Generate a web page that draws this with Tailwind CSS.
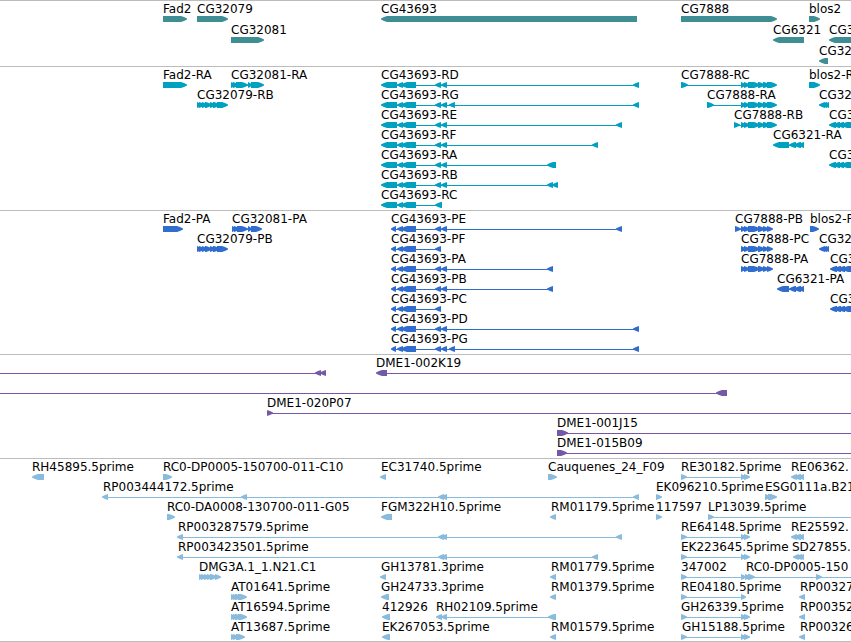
<!DOCTYPE html>
<html lang="en">
<head>
    <meta charset="UTF-8">
    <meta name="viewport" content="width=device-width, initial-scale=1.0">
    <title>Genome Tracks</title>
    <script src="https://cdn.jsdelivr.net/npm/@tailwindcss/browser@4"></script>
</head>
<body class="bg-white text-black font-['DejaVu_Sans',sans-serif] text-[12px] leading-3">

    <main id="tracks" class="w-full overflow-hidden border-b border-[#bcbcbc]"></main>

    <script>
        // Anything past this point runs off the right side of the view
        const END = 4000;

        // Shared exon groups
        const rTail = [[381, 397], [397, 403], [401, 416]];
        const pTail = [[391, 396], [397, 403], [401, 416]];
        const mid = [[435, 441], [441, 447]];
        const cg7888 = [[741, 746], [744, 750], [748, 760], [758, 765], [763, 770], [767, 777]];
        const cg7888p = [[741, 746], [744, 750], [748, 760], [758, 765], [763, 769], [767, 773]];
        const cg32079 = [[197, 202], [199, 205], [202, 208], [205, 212], [210, 216], [213, 220], [217, 228]];
        const cg32081 = [[231, 236], [233, 239], [236, 248], [248, 252], [251, 264]];
        const cg32081p = [[232, 237], [234, 240], [237, 248], [248, 252], [251, 262]];
        const cg6321 = [[789, 796], [794, 801], [798, 804]];
        const cg32 = [[819, 825], [821, 827], [824, 829]];
        const cg3 = [[829, 836], [833, 840], [837, 844], [841, 860]];
        const cg3p = [[830, 837], [834, 841], [838, 845], [842, 860]];
        const re = [[681, 687], [741, 746], [744, 750]];
        const re3 = [[791, 797], [794, 801], [798, 804]];
        const estMid = [[438, 444], [441, 447]];
        const at = [[231, 236], [233, 239], [235, 242], [238, 247]];

        // Feature: [label, label x, strand, exons, line start, line end]
        const tracks = [
            { fill: 'fill-[#3e8e93]', track: 'pt-0.5', row: 'h-[21px]', rows: [
                [
                    ['Fad2', 163, '>', [[163, 187]]],
                    ['CG32079', 197, '>', [[197, 228]]],
                    ['CG43693', 381, '<', [[381, 637]]],
                    ['CG7888', 681, '>', [[681, 777]]],
                    ['blos2', 809, '>', [[809, 820]]],
                ],
                [
                    ['CG32081', 231, '>', [[231, 264]]],
                    ['CG6321', 773, '<', [[773, 804]]],
                    ['CG3', 829, '<', [[829, END]]],
                ],
                [
                    ['CG32', 819, '<', [[819, 828]]],
                ],
            ] },
            { fill: 'fill-[#00a0c0]', track: 'pt-0.5 pb-px', row: 'h-5', rows: [
                [
                    ['Fad2-RA', 163, '>', [[163, 187]]],
                    ['CG32081-RA', 231, '>', cg32081],
                    ['CG43693-RD', 381, '<', [...rTail, ...mid, [633, 639]]],
                    ['CG7888-RC', 681, '>', [[681, 688], ...cg7888]],
                    ['blos2-R', 809, '>', [[809, 820]]],
                ],
                [
                    ['CG32079-RB', 197, '>', cg32079],
                    ['CG43693-RG', 381, '<', [...rTail, ...mid, [449, 455], [633, 639]]],
                    ['CG7888-RA', 707, '>', [[707, 714], ...cg7888]],
                    ['CG32', 819, '<', cg32],
                ],
                [
                    ['CG43693-RE', 381, '<', [...rTail, ...mid, [616, 622]]],
                    ['CG7888-RB', 734, '>', [[734, 740], ...cg7888]],
                    ['CG3', 829, '<', cg3],
                ],
                [
                    ['CG43693-RF', 381, '<', [...rTail, ...mid, [592, 598]]],
                    ['CG6321-RA', 773, '<', [[773, 789], ...cg6321]],
                ],
                [
                    ['CG43693-RA', 381, '<', [...rTail, ...mid, [547, 556]]],
                    ['CG3', 829, '<', cg3],
                ],
                [
                    ['CG43693-RB', 381, '<', [...rTail, ...mid, [547, 553], [552, 558]]],
                ],
                [
                    ['CG43693-RC', 381, '<', [...rTail, [435, 442]]],
                ],
            ] },
            { fill: 'fill-[#316dcd]', track: 'pt-0.5 pb-px', row: 'h-5', rows: [
                [
                    ['Fad2-PA', 163, '>', [[163, 183]]],
                    ['CG32081-PA', 232, '>', cg32081p],
                    ['CG43693-PE', 391, '<', [...pTail, ...mid, [616, 622]]],
                    ['CG7888-PB', 735, '>', [[735, 741], ...cg7888p]],
                    ['blos2-P', 810, '>', [[810, 819]]],
                ],
                [
                    ['CG32079-PB', 197, '>', cg32079],
                    ['CG43693-PF', 391, '<', [...pTail, [435, 441]]],
                    ['CG7888-PC', 741, '>', cg7888p],
                    ['CG32', 819, '<', cg32],
                ],
                [
                    ['CG43693-PA', 391, '<', [...pTail, ...mid, [547, 553]]],
                    ['CG7888-PA', 741, '>', cg7888p],
                    ['CG3', 830, '<', cg3p],
                ],
                [
                    ['CG43693-PB', 391, '<', [...pTail, ...mid, [547, 553]]],
                    ['CG6321-PA', 777, '<', [[777, 789], ...cg6321]],
                ],
                [
                    ['CG43693-PC', 391, '<', [...pTail, [435, 441]]],
                    ['CG3', 830, '<', cg3p],
                ],
                [
                    ['CG43693-PD', 391, '<', [...pTail, ...mid, [633, 639]]],
                ],
                [
                    ['CG43693-PG', 391, '<', [...pTail, ...mid, [449, 455], [633, 639]]],
                ],
            ] },
            { fill: 'fill-[#7559a8]', track: 'pt-0.5 pb-px', row: 'h-5', rows: [
                [
                    ['', 0, '<', [[315, 321], [320, 326]], 0],
                    ['DME1-002K19', 376, '<', [[376, 387]], 380, END],
                ],
                [
                    ['', 0, '<', [[716, 727]], 0],
                ],
                [
                    ['DME1-020P07', 267, '>', [[267, 273]], 267, END],
                ],
                [
                    ['DME1-001J15', 557, '>', [[557, 568]], 557, END],
                ],
                [
                    ['DME1-015B09', 557, '>', [[557, 567]], 557, END],
                ],
            ] },
            { fill: 'fill-[#88bbdd]', track: 'pt-0.5', row: 'h-5', rows: [
                [
                    ['RH45895.5prime', 32, '<', [[32, 44]]],
                    ['RC0-DP0005-150700-011-C10', 163, '>', [[163, 172]]],
                    ['EC31740.5prime', 381, '<', [[380, 386]]],
                    ['Cauquenes_24_F09', 548, '>', [[548, 557]]],
                    ['RE30182.5prime', 681, '>', re],
                    ['RE06362.', 791, '<', re3],
                ],
                [
                    ['RP003444172.5prime', 103, '<', [[102, 108], [241, 247], ...estMid, [633, 639]]],
                    ['EK096210.5prime', 656, '>', [[656, 662]]],
                    ['ESG0111a.B21', 765, '>', [[765, 771], [768, 777]]],
                ],
                [
                    ['RC0-DA0008-130700-011-G05', 167, '>', [[167, 175]]],
                    ['FGM322H10.5prime', 381, '<', [[381, 392]]],
                    ['RM01179.5prime', 551, '<', [[550, 556]]],
                    ['117597', 656, '>', [[656, 662]]],
                    ['LP13039.5prime', 708, '>', [[708, 714]], 708, END],
                ],
                [
                    ['RP003287579.5prime', 178, '<', [[177, 183], ...estMid, [616, 622]]],
                    ['RE64148.5prime', 681, '>', re],
                    ['RE25592.', 791, '<', re3],
                ],
                [
                    ['RP003423501.5prime', 178, '<', [[177, 183], ...estMid, [592, 598]]],
                    ['EK223645.5prime', 681, '>', re],
                    ['SD27855.', 792, '<', [[793, 799], [796, 802], [799, 804]]],
                ],
                [
                    ['DMG3A.1_1.N21.C1', 199, '>', [[199, 204], [201, 207], [204, 210], [207, 213], [210, 217], [215, 221]]],
                    ['GH13781.3prime', 381, '<', [[380, 386]]],
                    ['RM01779.5prime', 551, '<', [[550, 556]]],
                    ['347002', 681, '>', [[681, 687], [741, 746]]],
                    ['RC0-DP0005-150', 746, '>', [[745, 751], [748, 755], [816, 822]], 746, END],
                ],
                [
                    ['AT01641.5prime', 231, '>', at],
                    ['GH24733.3prime', 381, '<', [[381, 389]]],
                    ['RM01379.5prime', 551, '<', [[550, 556]]],
                    ['RE04180.5prime', 681, '>', [[681, 687], [741, 746]]],
                    ['RP00327', 800, '<', [[799, 805]]],
                ],
                [
                    ['AT16594.5prime', 231, '>', at],
                    ['412926', 382, '<', [[382, 390]]],
                    ['RH02109.5prime', 436, '<', [[436, 442], [441, 447], [548, 556]]],
                    ['GH26339.5prime', 681, '>', re],
                    ['RP00352', 800, '<', [[799, 805]]],
                ],
                [
                    ['AT13687.5prime', 231, '>', [[231, 236], [233, 239], [236, 245]]],
                    ['EK267053.5prime', 382, '<', [[382, 390]]],
                    ['RM01579.5prime', 551, '<', [[550, 556]]],
                    ['GH15188.5prime', 682, '>', re],
                    ['RP00326', 800, '<', [[799, 805]]],
                ],
            ] },
        ];

        // Exon box with a blunt pointed end on the strand side
        function exon(strand, [a, b]) {
            const tip = Math.min(6, b - a);
            const dir = strand === '>' ? 1 : -1;
            const head = strand === '>' ? b : a;
            const tail = strand === '>' ? a : b;
            const neck = head - dir * tip;
            const cheek = head - dir * tip / 2;
            return `<polygon points="${tail},0 ${neck},0 ${cheek},1 ${head},2.5 ${head},3.5 ${cheek},5 ${neck},6 ${tail},6"/>`;
        }

        function glyph([, , strand, exons, from, to]) {
            const start = from ?? exons[0][0] + 3;
            const end = to ?? exons[exons.length - 1][1] - 3;
            const line = exons.length > 1 || from !== undefined
                ? `<rect x="${start}" y="3" width="${end - start}" height="1"/>`
                : '';
            return line + exons.map(e => exon(strand, e)).join('');
        }

        document.getElementById('tracks').innerHTML = tracks.map(t => `
            <section class="border-t border-[#bcbcbc] ${t.track}">
                ${t.rows.map(row => `
                    <div class="relative ${t.row}">
                        <div class="h-[13px]">
                            ${row.filter(f => f[0]).map(f => `<span class="absolute top-0 whitespace-nowrap" style="left:${f[1]}px">${f[0]}</span>`).join('')}
                        </div>
                        <svg class="block w-full h-1.5 ${t.fill}" aria-hidden="true">${row.map(glyph).join('')}</svg>
                    </div>`).join('')}
            </section>`).join('');
    </script>

</body>
</html>
